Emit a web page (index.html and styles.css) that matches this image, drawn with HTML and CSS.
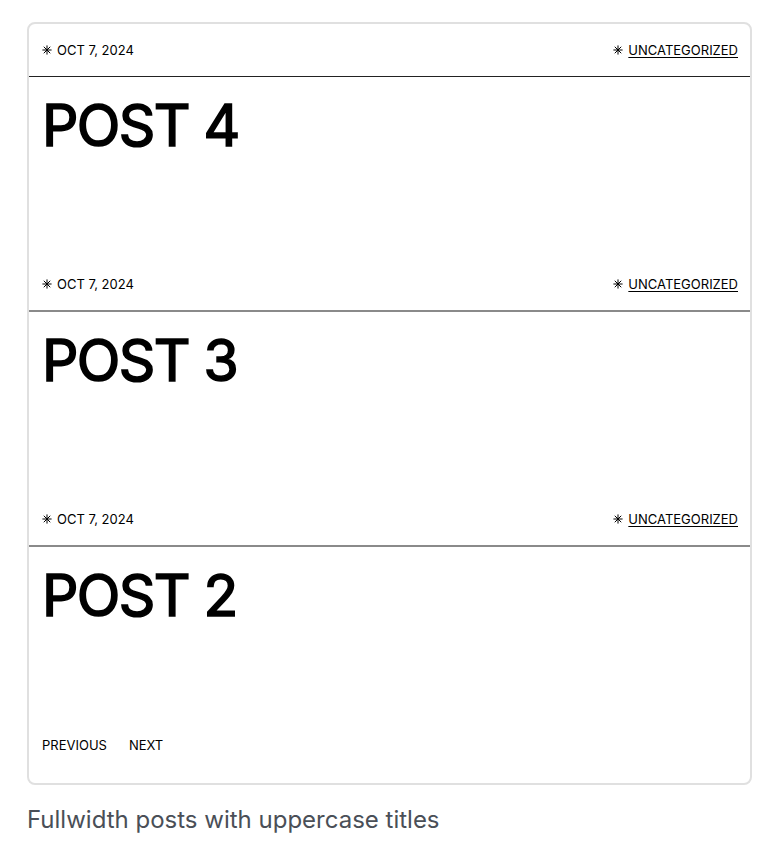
FILE: index.html
```html
<!DOCTYPE html>
<html>
<head>
<meta charset="utf-8">
<link rel="stylesheet" href="styles.css">
</head>
<body>
<div class="card">
  <article class="post">
    <div class="meta">
      <span class="meta-item"><svg class="star" viewBox="0 0 12 12"><path d="M6 0.5V11.5M0.5 6H11.5M2.1 2.1L9.9 9.9M9.9 2.1L2.1 9.9" /></svg>OCT 7, 2024</span>
      <span class="meta-item"><svg class="star" viewBox="0 0 12 12"><path d="M6 0.5V11.5M0.5 6H11.5M2.1 2.1L9.9 9.9M9.9 2.1L2.1 9.9" /></svg><a href="#">UNCATEGORIZED</a></span>
    </div>
    <h2 class="title">POST 4</h2>
  </article>
  <article class="post">
    <div class="meta">
      <span class="meta-item"><svg class="star" viewBox="0 0 12 12"><path d="M6 0.5V11.5M0.5 6H11.5M2.1 2.1L9.9 9.9M9.9 2.1L2.1 9.9" /></svg>OCT 7, 2024</span>
      <span class="meta-item"><svg class="star" viewBox="0 0 12 12"><path d="M6 0.5V11.5M0.5 6H11.5M2.1 2.1L9.9 9.9M9.9 2.1L2.1 9.9" /></svg><a href="#">UNCATEGORIZED</a></span>
    </div>
    <h2 class="title">POST 3</h2>
  </article>
  <article class="post">
    <div class="meta">
      <span class="meta-item"><svg class="star" viewBox="0 0 12 12"><path d="M6 0.5V11.5M0.5 6H11.5M2.1 2.1L9.9 9.9M9.9 2.1L2.1 9.9" /></svg>OCT 7, 2024</span>
      <span class="meta-item"><svg class="star" viewBox="0 0 12 12"><path d="M6 0.5V11.5M0.5 6H11.5M2.1 2.1L9.9 9.9M9.9 2.1L2.1 9.9" /></svg><a href="#">UNCATEGORIZED</a></span>
    </div>
    <h2 class="title">POST 2</h2>
  </article>
  <nav class="pager">
    <a href="#">PREVIOUS</a>
    <a href="#">NEXT</a>
  </nav>
</div>
<p class="caption">Fullwidth posts with uppercase titles</p>
</body>
</html>
```
FILE: styles.css
```css
html, body {
  margin: 0;
  padding: 0;
  background: #fff;
}
body {
  padding: 22px 32px 0 27px;
  font-family: Inter, "Noto Sans", sans-serif;
  color: #000;
}
.card {
  width: 721px;
  border: 2px solid #e0e0e0;
  border-radius: 8px;
  overflow: hidden;
}
.post {
  height: 235px;
  display: flex;
  flex-direction: column;
}
.post:first-child {
  height: 233px;
}
.meta {
  height: 55px;
  border-bottom: 2px solid #8a8a8a;
  display: flex;
  justify-content: space-between;
  align-items: center;
  padding: 0 12px 0 13px;
  font-size: 13px;
  box-sizing: border-box;
  flex-shrink: 0;
}
.post:first-child .meta {
  height: 53px;
  border-bottom: 1px solid #222;
}
.meta-item {
  display: flex;
  align-items: center;
}
.meta-item a {
  color: #000;
  text-decoration: underline;
  text-underline-offset: 2px;
}
.star {
  width: 10px;
  height: 10px;
  margin-right: 5px;
  stroke: #000;
  stroke-width: 1.2;
  fill: none;
}
.title {
  margin: 0;
  padding: 0 13px;
  font-size: 57px;
  font-weight: 400;
  -webkit-text-stroke: 1.6px #000;
  line-height: 1;
  letter-spacing: -1.6px;
  margin-top: 20px;
}
.pager {
  display: flex;
  gap: 22px;
  padding: 10px 13px 30px;
  font-size: 13px;
}
.pager a {
  color: #000;
  text-decoration: none;
}
.caption {
  margin: 21px 0 0;
  font-size: 24px;
  line-height: 28px;
  color: #4a4f57;
  font-weight: 400;
}
```
